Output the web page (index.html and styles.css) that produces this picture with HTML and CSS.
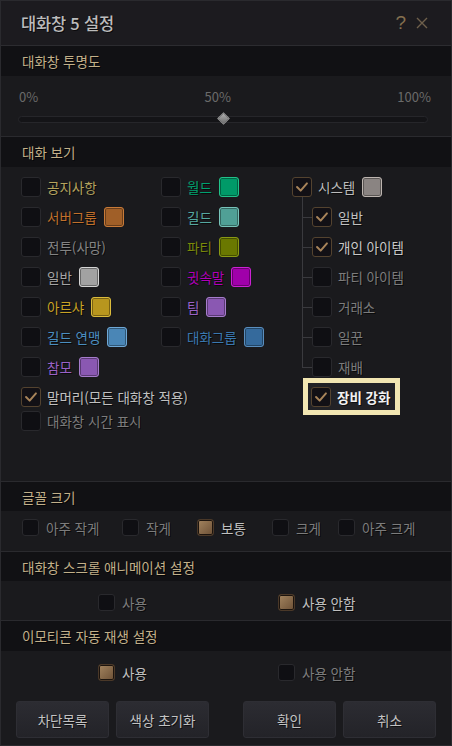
FILE: index.html
```html
<!DOCTYPE html>
<html lang="ko">
<head>
<meta charset="utf-8">
<title>대화창 5 설정</title>
<link rel="stylesheet" href="styles.css">
</head>
<body>
<div class="window">
  <div class="titlebar">
    <div class="title">대화창 5 설정</div>
    <div class="title-icons">
      <span class="help">?</span>
      <svg class="close" width="12" height="12" viewBox="0 0 12 12"><path d="M1 1L11 11M11 1L1 11"/></svg>
    </div>
  </div>

  <div class="sec-head">대화창 투명도</div>
  <div class="slider-area">
    <div class="slider-labels"><span>0%</span><span>50%</span><span>100%</span></div>
    <div class="track"><div class="thumb"></div></div>
  </div>

  <div class="sec-head">대화 보기</div>
  <div class="chat-body">
    <div class="col col1">
      <div class="opt"><span class="cb"></span><span class="lbl c-notice">공지사항</span></div>
      <div class="opt"><span class="cb"></span><span class="lbl c-server">서버그룹</span><span class="sw sw-server"></span></div>
      <div class="opt"><span class="cb"></span><span class="lbl c-battle">전투(사망)</span></div>
      <div class="opt"><span class="cb"></span><span class="lbl c-normal">일반</span><span class="sw sw-normal"></span></div>
      <div class="opt"><span class="cb"></span><span class="lbl c-arsha">아르샤</span><span class="sw sw-arsha"></span></div>
      <div class="opt"><span class="cb"></span><span class="lbl c-alliance">길드 연맹</span><span class="sw sw-alliance"></span></div>
      <div class="opt"><span class="cb"></span><span class="lbl c-staff">참모</span><span class="sw sw-staff"></span></div>
      <div class="opt"><span class="cb on"><svg viewBox="0 0 20 20"><path d="M4.5 10L8.5 14L15.5 6"/></svg></span><span class="lbl c-bright">말머리(모든 대화창 적용)</span></div>
      <div class="opt tight"><span class="cb"></span><span class="lbl c-dim">대화창 시간 표시</span></div>
    </div>
    <div class="col col2">
      <div class="opt"><span class="cb"></span><span class="lbl c-world">월드</span><span class="sw sw-world"></span></div>
      <div class="opt"><span class="cb"></span><span class="lbl c-guild">길드</span><span class="sw sw-guild"></span></div>
      <div class="opt"><span class="cb"></span><span class="lbl c-party">파티</span><span class="sw sw-party"></span></div>
      <div class="opt"><span class="cb"></span><span class="lbl c-whisper">귓속말</span><span class="sw sw-whisper"></span></div>
      <div class="opt"><span class="cb"></span><span class="lbl c-team">팀</span><span class="sw sw-team"></span></div>
      <div class="opt"><span class="cb"></span><span class="lbl c-group">대화그룹</span><span class="sw sw-group"></span></div>
    </div>
    <div class="col col3">
      <div class="opt"><span class="cb on"><svg viewBox="0 0 20 20"><path d="M4.5 10L8.5 14L15.5 6"/></svg></span><span class="lbl c-sys">시스템</span><span class="sw sw-sys"></span></div>
      <div class="subtree">
        <div class="opt sub"><span class="cb on"><svg viewBox="0 0 20 20"><path d="M4.5 10L8.5 14L15.5 6"/></svg></span><span class="lbl c-bright">일반</span></div>
        <div class="opt sub"><span class="cb on"><svg viewBox="0 0 20 20"><path d="M4.5 10L8.5 14L15.5 6"/></svg></span><span class="lbl c-bright strong">개인 아이템</span></div>
        <div class="opt sub"><span class="cb"></span><span class="lbl c-dim">파티 아이템</span></div>
        <div class="opt sub"><span class="cb"></span><span class="lbl c-dim">거래소</span></div>
        <div class="opt sub"><span class="cb"></span><span class="lbl c-dim">일꾼</span></div>
        <div class="opt sub"><span class="cb"></span><span class="lbl c-dim">재배</span></div>
      </div>
      <div class="highlight"><span class="cb on"><svg viewBox="0 0 20 20"><path d="M4.5 10L8.5 14L15.5 6"/></svg></span><span class="lbl c-white">장비 강화</span></div>
    </div>
  </div>

  <div class="sec-head short">글꼴 크기</div>
  <div class="radio-row font-row">
    <div class="ropt"><span class="rb"></span><span class="lbl c-dim">아주 작게</span></div>
    <div class="ropt"><span class="rb"></span><span class="lbl c-dim">작게</span></div>
    <div class="ropt"><span class="rb on"></span><span class="lbl c-bright">보통</span></div>
    <div class="ropt"><span class="rb"></span><span class="lbl c-dim">크게</span></div>
    <div class="ropt"><span class="rb"></span><span class="lbl c-dim">아주 크게</span></div>
  </div>

  <div class="sec-head short">대화창 스크롤 애니메이션 설정</div>
  <div class="radio-row pair-row scroll-row">
    <div class="ropt"><span class="rb"></span><span class="lbl c-dim">사용</span></div>
    <div class="ropt"><span class="rb on"></span><span class="lbl c-bright">사용 안함</span></div>
  </div>

  <div class="sec-head">이모티콘 자동 재생 설정</div>
  <div class="radio-row pair-row emo-row">
    <div class="ropt"><span class="rb on"></span><span class="lbl c-bright">사용</span></div>
    <div class="ropt"><span class="rb"></span><span class="lbl c-dim">사용 안함</span></div>
  </div>

  <div class="buttons">
    <div class="btn-group">
      <button class="btn">차단목록</button>
      <button class="btn">색상 초기화</button>
    </div>
    <div class="btn-group">
      <button class="btn">확인</button>
      <button class="btn">취소</button>
    </div>
  </div>
</div>
</body>
</html>
```

FILE: styles.css
```css
* { box-sizing: border-box; }
html, body { margin: 0; padding: 0; background: #1a1a1d; }
body {
  font-family: "Noto Sans CJK KR", "Noto Sans", sans-serif;
  font-size: 13.5px;
  line-height: 16px;
  color: #b8b8b8;
}
.window {
  width: 452px;
  height: 746px;
  border: 1px solid #2a2a2e;
  background: #1a1a1d;
  display: flex;
  flex-direction: column;
  overflow: hidden;
}
.titlebar {
  height: 45px;
  flex: 0 0 45px;
  background: #1c1b1f;
  border-bottom: 1px solid #2c2c30;
  display: flex;
  align-items: center;
  justify-content: space-between;
  padding: 0 23px 0 20px;
}
.title {
  font-size: 16.5px;
  line-height: 20px;
  color: #bcbcbc;
  font-weight: 500;
  letter-spacing: -0.2px;
  text-shadow: 1px 1px 0 rgba(0,0,0,.6);
}
.title-icons { display: flex; align-items: center; gap: 10px; }
.help {
  font-family: "Liberation Sans", sans-serif;
  font-size: 19px;
  color: #84704f;
  line-height: 20px;
}
.close path { stroke: #6e604c; stroke-width: 1.4; fill: none; }

.sec-head {
  height: 30px;
  flex: 0 0 30px;
  background: #111114;
  color: #c2b08a;
  font-size: 13.5px;
  display: flex;
  align-items: center;
  padding-left: 21px;
  text-shadow: 1px 1px 0 rgba(0,0,0,.7);
}
.sec-head.short { height: 29px; flex-basis: 29px; }

.slider-area {
  height: 61px;
  flex: 0 0 61px;
  border-bottom: 1px solid #2a2a2e;
  padding: 13px 20px 0 17px;
}
.slider-labels {
  display: flex;
  justify-content: space-between;
  color: #6a6a6a;
  padding-left: 1px;
  line-height: 16px;
  font-size: 13px;
}
.track {
  position: relative;
  margin-top: 11px;
  margin-right: 3px;
  height: 7px;
  border: 1px solid #26262a;
  border-radius: 4px;
  background: #141417;
}
.thumb {
  position: absolute;
  left: 200px;
  top: -3px;
  width: 9px;
  height: 9px;
  transform: rotate(45deg);
  background: linear-gradient(135deg, #b0b0b0, #6e6e6e);
  border: 1px solid #9a9a9a;
}

.chat-body {
  height: 315px;
  flex: 0 0 315px;
  border-bottom: 1px solid #2a2a2e;
  display: flex;
  padding: 5px 0 0 20px;
}
.col { display: flex; flex-direction: column; min-width: 0; }
.col1 { flex: 0 0 140px; }
.col2 { flex: 0 0 131px; }
.col3 { flex: 1 1 auto; }
.opt {
  height: 30px;
  display: flex;
  align-items: center;
  gap: 6px;
  white-space: nowrap;
  position: relative;
}
.opt.tight { margin-top: -6px; }
.lbl { text-shadow: 1px 1px 0 rgba(0,0,0,.6); white-space: nowrap; }
.lbl + .sw { margin-left: 1px; }

.cb {
  flex: 0 0 20px;
  width: 20px;
  height: 20px;
  border: 1px solid #29292d;
  border-radius: 3px;
  background: #0f0f13;
  display: inline-flex;
}
.cb.on { border-color: #54432f; background: #121015; }
.cb svg { width: 18px; height: 18px; }
.cb svg path { fill: none; stroke: #a8845a; stroke-width: 2.2; stroke-linecap: round; stroke-linejoin: round; }

.sw {
  flex: 0 0 20px;
  width: 20px;
  height: 20px;
  border-radius: 3px;
  border: 1px solid;
  box-shadow: inset 0 0 0 1px rgba(0,0,0,.35);
}
.sw-server { background: #a05f28; border-color: #c87a38; }
.sw-normal { background: #a2a2a2; border-color: #d4d4d4; }
.sw-arsha { background: #b8961e; border-color: #dcbc3c; }
.sw-alliance { background: #4a86b6; border-color: #6fa8d6; }
.sw-staff { background: #8a58b2; border-color: #a67ccc; }
.sw-world { background: #009a68; border-color: #22c28a; }
.sw-guild { background: #50a096; border-color: #78c4ba; }
.sw-party { background: #6a7800; border-color: #8a9a14; }
.sw-whisper { background: #a000aa; border-color: #cc22d4; }
.sw-team { background: #8a58b2; border-color: #a67ccc; }
.sw-group { background: #356a9c; border-color: #5a8ebe; }
.sw-sys { background: #8a8482; border-color: #bdb5b0; }

.c-notice { color: #b5a35e; }
.c-server { color: #c0702c; }
.c-battle { color: #848484; }
.c-normal { color: #a4a4a4; }
.c-arsha { color: #c8a224; }
.c-alliance { color: #4a8ec0; }
.c-staff { color: #9a62c8; }
.c-world { color: #00a070; }
.c-guild { color: #55a8a0; }
.c-party { color: #7b8a0a; }
.c-whisper { color: #b000b8; }
.c-team { color: #9a62c8; }
.c-group { color: #3a78b0; }
.c-sys { color: #bcbcbc; }
.c-bright { color: #c0c0c0; }
.c-dim { color: #7c7c7c; }
.c-white { color: #f2f2f2; font-weight: 700; }
.strong { color: #c8c8c8; }

.subtree { margin-left: 10px; display: flex; flex-direction: column; }
.opt.sub { padding-left: 10px; }
.opt.sub::before {
  content: "";
  position: absolute;
  left: 0;
  top: 0;
  height: 100%;
  border-left: 1px solid #3a3a3e;
}
.opt.sub:first-child::before { top: -5px; height: calc(100% + 5px); }
.opt.sub:last-child::before { height: 50%; }
.opt.sub::after {
  content: "";
  position: absolute;
  left: 0;
  top: 50%;
  width: 10px;
  border-top: 1px solid #3a3a3e;
}

.highlight {
  align-self: flex-start;
  display: inline-flex;
  align-items: center;
  gap: 6px;
  margin: -4px 0 0 11px;
  border: 5px solid #f2e6b2;
  background: #222226;
  padding: 4px 5px 3px 3px;
  white-space: nowrap;
}

.radio-row { display: grid; align-items: start; }
.font-row {
  height: 41px;
  flex: 0 0 41px;
  border-bottom: 1px solid #2a2a2e;
  padding: 8px 0 0 21px;
  grid-template-columns: 100px 75px 75px 66px auto;
}
.pair-row {
  padding: 13px 0 0 97px;
  grid-template-columns: 180px auto;
}
.scroll-row { height: 40px; flex: 0 0 40px; border-bottom: 1px solid #2a2a2e; }
.emo-row { height: 50px; flex: 0 0 50px; }
.ropt { display: flex; align-items: center; gap: 7px; white-space: nowrap; }
.rb {
  flex: 0 0 17px;
  width: 17px;
  height: 17px;
  border: 1px solid #29292d;
  border-radius: 3px;
  background: #0f0f13;
}
.rb.on {
  border-color: #4a3828;
  background: linear-gradient(135deg, #a3845f, #6c5036);
  box-shadow: inset 0 0 0 1px #1c140e;
}

.buttons {
  display: flex;
  justify-content: space-between;
  padding: 0 15px;
  height: 37px;
  flex: 0 0 37px;
}
.btn-group { display: flex; gap: 7px; }
.btn {
  width: 93px;
  height: 37px;
  border: 1px solid #2e2e34;
  border-radius: 3px;
  background: linear-gradient(#2c2c32, #232328);
  color: #c2c2c2;
  font-family: "Noto Sans CJK KR", "Noto Sans", sans-serif;
  font-size: 13.5px;
  line-height: 16px;
  padding: 0;
  text-shadow: 1px 1px 0 rgba(0,0,0,.6);
}
```
